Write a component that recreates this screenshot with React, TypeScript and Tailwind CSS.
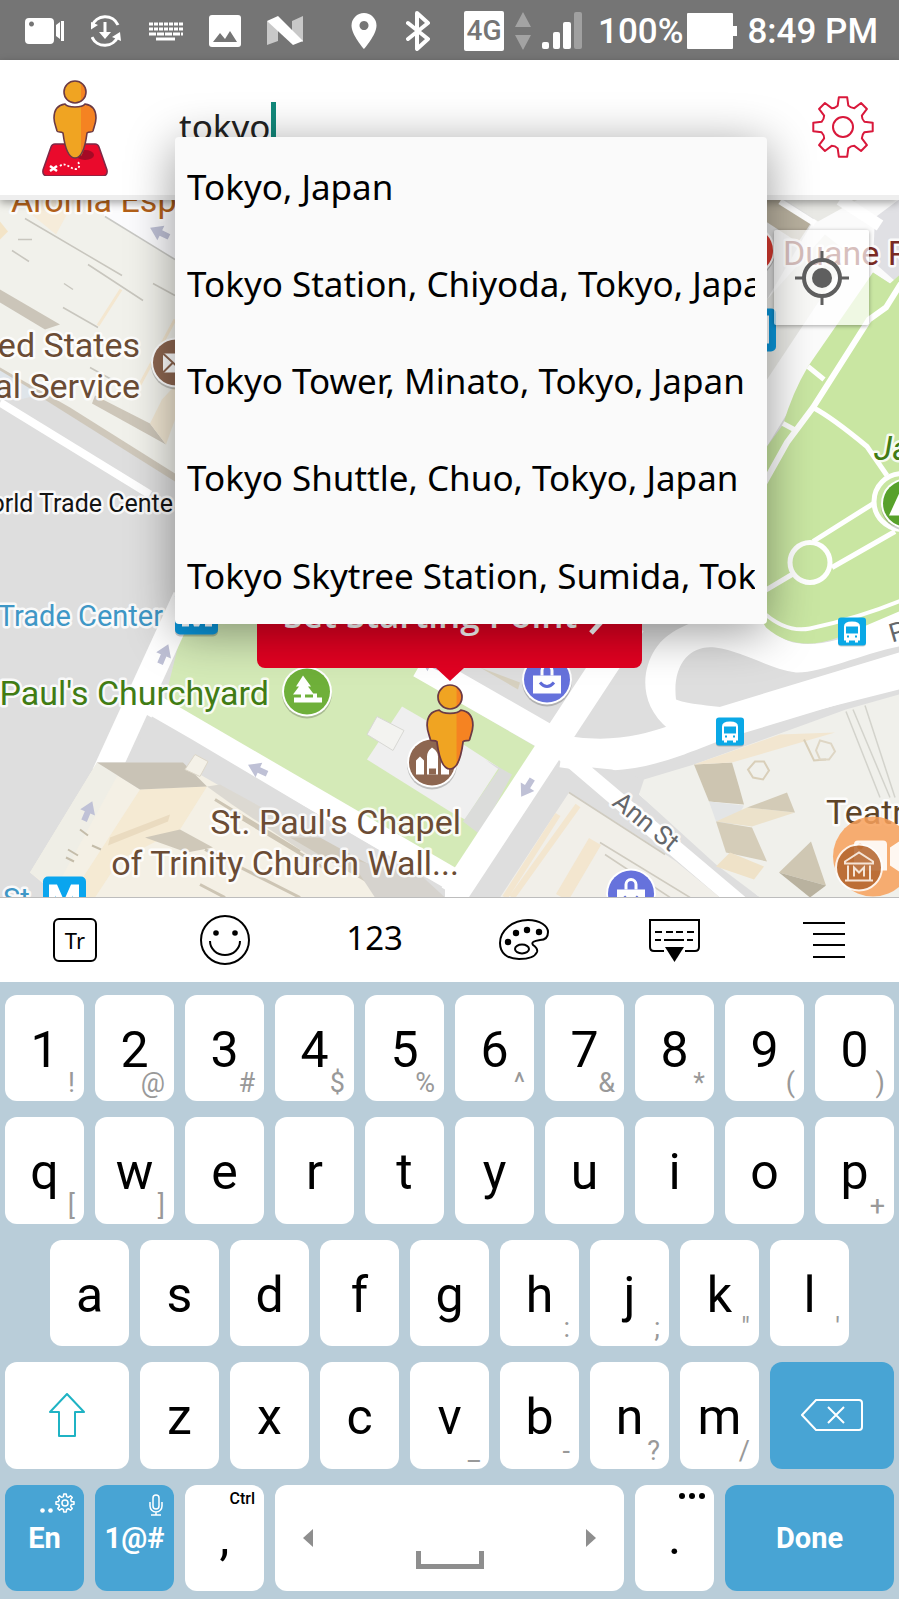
import type { ReactNode } from 'react';
import clsx from 'clsx';

const SUGGESTIONS = [
  'Tokyo, Japan',
  'Tokyo Station, Chiyoda, Tokyo, Japan',
  'Tokyo Tower, Minato, Tokyo, Japan',
  'Tokyo Shuttle, Chuo, Tokyo, Japan',
  'Tokyo Skytree Station, Sumida, Tokyo, Japan',
];

type KeyDef = { label: string; hint?: string };

const NUMBER_ROW: KeyDef[] = [
  { label: '1', hint: '!' },
  { label: '2', hint: '@' },
  { label: '3', hint: '#' },
  { label: '4', hint: '$' },
  { label: '5', hint: '%' },
  { label: '6', hint: '^' },
  { label: '7', hint: '&' },
  { label: '8', hint: '*' },
  { label: '9', hint: '(' },
  { label: '0', hint: ')' },
];

const TOP_ROW: KeyDef[] = [
  { label: 'q', hint: '[' },
  { label: 'w', hint: ']' },
  { label: 'e' },
  { label: 'r' },
  { label: 't' },
  { label: 'y' },
  { label: 'u' },
  { label: 'i' },
  { label: 'o' },
  { label: 'p', hint: '+' },
];

const HOME_ROW: KeyDef[] = [
  { label: 'a' },
  { label: 's' },
  { label: 'd' },
  { label: 'f' },
  { label: 'g' },
  { label: 'h', hint: ':' },
  { label: 'j', hint: ';' },
  { label: 'k', hint: '"' },
  { label: 'l', hint: "'" },
];

const BOTTOM_ROW: KeyDef[] = [
  { label: 'z' },
  { label: 'x' },
  { label: 'c' },
  { label: 'v', hint: '_' },
  { label: 'b', hint: '-' },
  { label: 'n', hint: '?' },
  { label: 'm', hint: '/' },
];

// Closed outline of a cog with eight teeth, centred on 0,0
function gearPath(outer: number, inner: number) {
  const point = (r: number, deg: number) => {
    const a = (deg * Math.PI) / 180;
    return `${(r * Math.cos(a)).toFixed(2)},${(r * Math.sin(a)).toFixed(2)}`;
  };
  let d = '';
  for (let i = 0; i < 8; i++) {
    const a = i * 45;
    d += `${i === 0 ? 'M' : 'L'}${point(inner, a - 14)}L${point(outer, a - 8)}L${point(outer, a + 8)}`;
    d += `L${point(inner, a + 14)}Q${point(inner * 0.93, a + 22)} ${point(inner, a + 31)}`;
  }
  return d + 'Z';
}

function Gear({ className, stroke }: { className?: string; stroke: number }) {
  return (
    <svg viewBox="-33 -33 66 66" className={className} fill="none" stroke="currentColor" strokeWidth={stroke} strokeLinejoin="round">
      <path d={gearPath(30, 22)} />
      <circle r="10" />
    </svg>
  );
}

function Pegman({ className }: { className?: string }) {
  return (
    <svg viewBox="0 0 44 79" className={className}>
      <path
        d="M12 24C15 28 29 28 32 24C39 25 43 30 43 38C43 43 41 47 40 51C39 53 36 51 34 53C33 61 30 78 22 78C14 78 11 61 10 53C8 51 5 53 4 51C3 47 1 43 1 38C1 30 5 25 12 24Z"
        fill="#f0a422"
      />
      <path d="M28 27C30 26 31 25 32 24C39 25 43 30 43 38C43 43 41 47 40 51C39 53 36 51 34 53C33 61 31 72 28 76Z" fill="#f58322" />
      <path
        d="M12 24C15 28 29 28 32 24C39 25 43 30 43 38C43 43 41 47 40 51C39 53 36 51 34 53C33 61 30 78 22 78C14 78 11 61 10 53C8 51 5 53 4 51C3 47 1 43 1 38C1 30 5 25 12 24Z"
        fill="none"
        stroke="#6b3a45"
        strokeWidth="1.6"
      />
      <circle cx="22" cy="12" r="11" fill="#f0a422" />
      <path d="M28 3A11 11 0 0 1 28 21Z" fill="#f58322" />
      <circle cx="22" cy="12" r="11" fill="none" stroke="#6b3a45" strokeWidth="1.6" />
    </svg>
  );
}

function StatusBar() {
  return (
    <div className="flex h-15 items-center bg-[#757575] pt-0.5 pr-[21px] pl-[25px] text-white">
      <div className="flex items-center gap-[26px]">
        <svg viewBox="0 0 40 32" className="h-8 w-10" fill="currentColor">
          <path fillRule="evenodd" d="M4 3h21a4 4 0 0 1 4 4v18a4 4 0 0 1-4 4H4a4 4 0 0 1-4-4V7a4 4 0 0 1 4-4Zm2.500 3.500a2.500 2.500 0 1 0 .01 0Z" />
          <path d="M31 10l4-3v17l-4-3ZM36 6h3v20h-3Z" />
        </svg>
        <svg viewBox="2 0 32 32" className="size-8" fill="none" stroke="currentColor" strokeWidth="3">
          <path d="M3 11A14 14 0 0 1 29 10M29 21A14 14 0 0 1 3 22" />
          <path d="M16 7v12" />
          <path d="M10 17h12l-6 7ZM0 6l9 4-8 5ZM32 26l-9-4 8-5Z" fill="currentColor" stroke="none" />
        </svg>
        <svg viewBox="0 0 34 32" className="h-8 w-[34px]" stroke="currentColor" strokeWidth="3">
          <path d="M0 9h34M0 14h34" strokeDasharray="4 1" />
          <path d="M0 19h34" strokeDasharray="7 1" />
          <path d="M7 24h19" />
        </svg>
        <svg viewBox="0 0 32 32" className="size-8">
          <rect width="32" height="32" rx="3" fill="currentColor" />
          <path d="M4 27l7-9 5 6 5-8 7 11Z" fill="#757575" />
        </svg>
        <svg viewBox="0 0 36 30" className="h-[30px] w-9" fill="currentColor">
          <path d="M0 5l11 5v15L0 29ZM25 5l11-5v26l-11-5Z" opacity=".6" />
          <path d="M0 5L11 0l25 25-10 4Z" />
        </svg>
      </div>
      <div className="ml-auto flex items-center">
        <svg viewBox="0 0 26 36" className="h-9 w-[26px]" fill="currentColor">
          <path fillRule="evenodd" d="M13 0a12.500 12.500 0 0 1 12.500 12.500C25.500 22 13 36 13 36S.5 22 .5 12.500A12.500 12.500 0 0 1 13 0Zm0 8a4.500 4.500 0 1 0 .01 0Z" />
        </svg>
        <svg viewBox="0 0 24 40" className="ml-[29px] h-10 w-6" fill="none" stroke="currentColor" strokeWidth="4" strokeLinecap="round" strokeLinejoin="round">
          <path d="M2 12l20 16-11 10V2l11 10L2 28" />
        </svg>
        <span className="ml-[34px] flex size-10 items-center justify-center rounded-xs bg-white font-[Roboto,sans-serif] text-[28px] font-medium text-[#757575]">
          4G
        </span>
        <svg viewBox="0 0 16 40" className="ml-[11px] h-10 w-4" fill="#a3a3a3">
          <path d="M8 1l8 15H0ZM8 39L0 24h16Z" />
        </svg>
        <svg viewBox="0 0 40 38" className="ml-[11px] h-[38px] w-10" fill="currentColor">
          <rect y="30" width="7" height="7" rx="2" />
          <rect x="11" y="20" width="7" height="17" rx="2" />
          <rect x="21" y="10" width="8" height="27" rx="2" />
          <rect x="32" width="8" height="37" rx="2" fill="#a0a0a0" />
        </svg>
        <span className="ml-4 pt-0.5 font-[Roboto,sans-serif] text-[35px] font-medium">100%</span>
        <svg viewBox="0 0 50 36" className="ml-1 h-9 w-[50px]" fill="currentColor">
          <rect width="46" height="36" rx="1" />
          <rect x="44" y="13" width="6" height="10" />
        </svg>
        <span className="ml-2.5 pt-0.5 font-[Roboto,sans-serif] text-[35px] font-medium">8:49 PM</span>
      </div>
    </div>
  );
}

function SearchHeader() {
  return (
    <header className="relative z-10 flex h-35 items-center border-b-[5px] border-[#eeeeee] bg-white shadow-[0_3px_8px_rgba(0,0,0,0.35)]">
      <div className="relative ml-[42px] h-24 w-[66px]">
        <svg viewBox="0 0 66 96" className="h-24 w-[66px]">
          <path d="M13 64h40q3 0 4 3l8 23q1 6-5 6H6q-6 0-5-6l8-23q1-3 4-3Z" fill="#ea0a2c" stroke="#7d2947" strokeWidth="1.500" />
          <ellipse cx="43" cy="75" rx="9" ry="5" fill="#a50a25" />
          <path d="M8 86l7 5M15 86l-7 5" stroke="#fff" strokeWidth="2.500" />
          <path d="M18 86c6-5 11 4 16 3s3-6 2-7" fill="none" stroke="#fff" strokeWidth="1.800" strokeDasharray="2 2" />
        </svg>
        <Pegman className="absolute top-0 left-[11px] h-[79px] w-11" />
      </div>
      <div className="ml-[71px] flex items-center pb-0.5">
        <input
          aria-label="Search location"
          defaultValue="tokyo"
          className="field-sizing-content bg-transparent font-['Noto_Sans',sans-serif] text-[35px] leading-[50px] text-[#222222] outline-none"
        />
        <span className="h-[50px] w-[5px] bg-[#12897b]" />
      </div>
      <button aria-label="Settings" className="mr-[23px] ml-auto pb-0.5 text-[#d9183b]">
        <Gear className="size-[66px]" stroke={2} />
      </button>
      <ul className="absolute top-[77px] right-[132px] left-[175px] z-20 rounded-sm bg-[#fafafa] shadow-[0_8px_48px_rgba(0,0,0,0.4)]">
        {SUGGESTIONS.map((place) => (
          <li key={place} className="h-[97px] px-3 last:h-[99px]">
            <button className="h-full w-full overflow-hidden pt-1 text-left font-['Noto_Sans',sans-serif] text-[35px] whitespace-nowrap text-black">
              {place}
            </button>
          </li>
        ))}
      </ul>
    </header>
  );
}

function Pin({ x, y, color, children }: { x: number; y: number; color: string; children?: ReactNode }) {
  return (
    <g transform={`translate(${x} ${y})`}>
      <circle cy="2" r="25" fill="#000" opacity=".2" />
      <circle r="25" fill="#fff" />
      <circle r="23" fill={color} />
      {children}
    </g>
  );
}

function BusStop({ x, y }: { x: number; y: number }) {
  return (
    <g transform={`translate(${x} ${y})`}>
      <rect y="1" width="28" height="28" rx="3" fill="#000" opacity=".2" />
      <rect width="28" height="28" rx="3" fill="#0aa8e6" />
      <path fillRule="evenodd" fill="#fff" d="M6 9q0-5 8-5t8 5v14h-2v2h-3v-2h-6v2H8v-2H6ZM8 9v7h12V9ZM9 18v2h2v-2Zm8 0v2h2v-2Z" />
    </g>
  );
}

function ShoppingBag() {
  return (
    <g fill="none" stroke="#fff" strokeWidth="3">
      <path d="M-5 -4v-5a5 5 0 0 1 10 0v5" />
      <path d="M-14 -4h28v18h-28Z" fill="#fff" stroke="none" />
      <path d="M-7 3q7 8 14 0" stroke="#5f6bd8" />
    </g>
  );
}

function OneWay({ x, y, angle }: { x: number; y: number; angle: number }) {
  return <path d="M11 0L-1 -8V-3H-10V3H-1V8Z" fill="#bfc1d6" transform={`translate(${x} ${y}) rotate(${angle})`} />;
}

// Drawn in screen coordinates, so the view box starts below the header
function StreetMap() {
  return (
    <svg
      viewBox="0 200 899 698"
      preserveAspectRatio="xMidYMid slice"
      className="absolute inset-0 h-full w-full font-[Roboto,sans-serif]"
    >
      <rect y="200" width="899" height="698" fill="#dedede" />

      {/* Post office block */}
      <path d="M0 200H175V478L0 368Z" fill="#f1f1eb" />
      <path d="M0 372L175 482V474L70 408L0 368Z" fill="#cfc8bb" />
      <path d="M0 371L40 395L20 400L0 388Z" fill="#dfe5ea" />
      <path d="M0 290L60 325L45 330L0 303Z" fill="#cbc5b9" />
      <path d="M95 396L150 424L166 445L92 404Z" fill="#cdc6b9" />
      <path d="M162 400L175 386V420L166 445L150 424Z" fill="#f0e6d2" />
      <path d="M28 212L40 200H75L56 235Z" fill="#f6ecda" />
      <path d="M0 222L8 232L0 240Z" fill="#f3e4c7" />
      <path d="M98 326L121 290M140 385L175 320" stroke="#f4e7d0" strokeWidth="3" />
      <path d="M25 219L122 276M88 265L143 301M63 308L98 328M153 284L175 296M18 240L32 240M12 251L29 262M64 284L73 290M90 368L126 388" stroke="#c8c6be" strokeWidth="1.500" />
      <path d="M95 200H175V260Q140 240 105 217Z" fill="#fbfbfd" />
      <path d="M105 217L175 260" stroke="#c8c8c4" strokeWidth="1.500" />
      <path d="M0 403L150 495" stroke="#fff" strokeWidth="8" />
      <OneWay x={160} y={233} angle={206} />

      {/* St. Paul's churchyard */}
      <path d="M187 610H400L462 704L537 748L459 868L430 872L327 808L163 708Z" fill="#d4eab7" />
      <path d="M367 760L402 707L428 722L499 768L465 820L450 812Z" fill="#efefef" />
      <path d="M377 717L404 731L393 751L367 735Z" fill="#f3f3f0" stroke="#d8d8d4" />
      <path d="M485 760L512 775L480 835L463 822L499 770Z" fill="#dbdcda" />

      {/* Loop at the foot of the park */}
      <path d="M669 730C638 705 642 670 655 650C668 630 690 624 720 612H760C775 645 800 650 838 640L899 605V690L700 740Z" fill="#fff" />
      <path d="M676 700C672 665 690 645 715 648C745 652 770 670 796 673C820 674 860 655 899 647V655L745 711C720 706 690 706 676 700Z" fill="#dedede" />

      {/* City Hall Park */}
      <path d="M767 280L800 235L830 200H899V290L873 273L767 447Z" fill="#fbfbfb" />
      <path d="M755 200H812V224L767 300H755Z" fill="#e2e2e2" />
      <path d="M755 200H780L812 222L798 243L755 215Z" fill="#b9b19f" />
      <path d="M785 200L818 222L858 200ZM767 300L825 235L850 255L767 380Z" fill="#e9e9e5" />
      <path d="M875 218L899 200V285L873 262Z" fill="#e0e0e4" />
      <path d="M780 202L815 224" stroke="#fff" strokeWidth="6" />
      <path d="M840 200L880 226" stroke="#fff" strokeWidth="12" />
      <path d="M873 273L890 284L899 276V612L838 638Q796 654 766 628L755 610V465L767 447L783 425Q793 392 808 367Z" fill="#c9e6a2" />
      <g fill="none" stroke="#fff" strokeWidth="5">
        <path d="M901 284L886 308L869 320L813 408L787 443L755 500" strokeWidth="6" />
        <path d="M808 367L824 380M783 424L796 431" />
        <path d="M813 408Q832 418 867 447L887 476" />
        <circle cx="810" cy="563" r="20" />
        <path d="M813 542L875 503M832 568L895 532M792 575L760 594" />
        <path d="M760 610Q785 634 810 629Q860 618 901 601" strokeWidth="4" />
        <circle cx="902" cy="502" r="28" />
      </g>

      {/* Roads */}
      <g fill="none" stroke="#fff">
        <path d="M186 598L105 775" strokeWidth="27" />
        <path d="M140 698L470 890" strokeWidth="23" />
        <path d="M420 665L565 748L750 906" strokeWidth="27" />
        <path d="M632 624L448 904" strokeWidth="28" />
        <path d="M562 752C625 762 660 748 720 724L905 668" strokeWidth="32" />
      </g>
      <path d="M480 668L520 683L518 690Z" fill="#d6d0bf" />

      {/* Blocks either side of Ann St */}
      <path d="M592 768L612 770L644 780L639 795L760 898H746Z" fill="#dedede" />
      <path d="M639 795L644 780L694 765L846 710L899 695V898H760L716 865Z" fill="#f0f0eb" />
      <path d="M694 765L732 763L739 787L744 805L709 802Z" fill="#cdc5b1" />
      <path d="M694 765L732 763L835 733L780 735Z" fill="#f2e6d0" />
      <path d="M709 802L744 806L732 827L716 822Z" fill="#e3e5e6" />
      <path d="M747 808L795 813L752 827L716 822Z" fill="#ece2cb" />
      <path d="M747 808L787 793L795 813Z" fill="#d3cbb7" />
      <path d="M716 822L752 828L767 862L726 853Z" fill="#d5cdb9" />
      <path d="M716 867L730 853L764 867L754 880Z" fill="#efe2c8" />
      <path d="M811 842L826 886L779 873Z" fill="#cfc7b3" />
      <path d="M779 873L826 886L810 898Z" fill="#b9b29f" />
      <path d="M755 762L764 762L769 771L763 780L753 778L748 770ZM804 740L814 761L826 760" fill="none" stroke="#d9cfb9" strokeWidth="2" />
      <path d="M820 741L831 744L835 752L829 760H820L816 751Z" fill="none" stroke="#ded6c4" strokeWidth="2" />
      <path d="M846 712L880 798M853 710L890 798M865 706L895 798" stroke="#d3d3cc" strokeWidth="1.500" />
      <path d="M569 793L640 838L676 862L720 898H500Z" fill="#f1efe9" />
      <path d="M578 806L512 898M558 815L505 898" stroke="#f3e6cf" strokeWidth="6" />
      <path d="M595 842L562 898" stroke="#f3e6cf" strokeWidth="14" />
      <path d="M569 793L665 855M600 843L690 898M605 855L670 898" stroke="#cfcbc0" strokeWidth="1.500" />

      {/* Block south of the churchyard */}
      <path d="M152 717L192 740L330 822L445 890V898H60L97 763L127 763Z" fill="#dedede" />
      <path d="M97 763L140 790L200 775L330 850L435 898H60L30 873Z" fill="#f4f0e5" />
      <path d="M30 873L97 763L118 775L55 890Z" fill="#efeee6" />
      <path d="M140 790L207 787L180 830L120 860L95 898H70Z" fill="#f5ead3" />
      <path d="M110 838L170 815L168 822L108 846Z" fill="#eadbc0" />
      <path d="M97 763H183L207 787L140 790Z" fill="#c9c3b6" />
      <path d="M145 838L180 830L213 848L187 853Z" fill="#cfc8b9" />
      <path d="M207 787L232 805L330 870L320 840L220 785Z" fill="#dcd9d2" />
      <path d="M240 818L330 872M215 800L300 852M205 850L300 898M200 885L225 898" stroke="#cdc5b4" strokeWidth="3" />
      <path d="M290 838L320 838L400 882L370 885Z" fill="#d0cabd" />
      <path d="M350 860L420 875L445 898H375Z" fill="#d6d3ce" />
      <path d="M195 755L208 762L200 777L185 770Z" fill="#f4f1e8" stroke="#dcd6c8" />
      <path d="M80 830l8 6M68 850l10 6M92 846l9 4M66 858l8 4" stroke="#c4bca9" strokeWidth="2" />
      <OneWay x={164} y={655} angle={-67} />
      <OneWay x={88} y={812} angle={-67} />
      <OneWay x={258} y={770} angle={205} />
      <OneWay x={527} y={788} angle={122} />
      <OneWay x={430} y={664} angle={205} />

      {/* Markers */}
      <Pin x={176} y={363} color="#8d6650">
        <path d="M-13 -9H14V10H-13Z" fill="#fff" />
        <path d="M-13 -9L0 3L14 -9M-13 10L-3 0M14 10L3 0" fill="none" stroke="#8d6650" strokeWidth="2" />
      </Pin>
      <Pin x={307} y={692} color="#6fb03a">
        <path d="M-4 -16L4 -5H1L7 3H-2V6H6V2H10V6H15V11H-13V6H-6V3H-14L-8 -5H-11Z" fill="#fff" />
      </Pin>
      <Pin x={547} y={680} color="#6672dc">
        <ShoppingBag />
      </Pin>
      <Pin x={631} y={894} color="#6672dc">
        <ShoppingBag />
      </Pin>
      <Pin x={432} y={763} color="#8d6650">
        <path d="M-16 12V-2L-12 -6L-8 -2V12ZM-5 12V-6Q-5 -11 0 -15Q6 -11 6 -6V12ZM9 12V-2L13 -6L17 -2V12Z" fill="#fff" />
        <path d="M-3 12V6H4V12Z" fill="#8d6650" />
      </Pin>
      <Pin x={750} y={251} color="#d93a30" />
      <Pin x={906} y={504} color="#58a12b">
        <path d="M-5 -14L-17 12H6Z" fill="#fff" />
      </Pin>
      <rect x="175" y="594" width="43" height="43" rx="5" fill="#000" opacity=".2" />
      <rect x="175" y="592" width="43" height="43" rx="5" fill="#0a97dc" />
      <path d="M182 627V600H190L197 616L204 600H212V627H205V612L199 627H194L189 612V627Z" fill="#fff" />
      <rect x="734" y="309" width="42" height="43" rx="5" fill="#0a97dc" />
      <path d="M745 316H769V344H745Z" fill="#fff" />
      <rect x="43" y="877" width="43" height="43" rx="5" fill="#0aa5ee" />
      <path d="M49 912V885H57L64 901L71 885H79V912H73V896L67 912H61L55 896V912Z" fill="#fff" />
      <BusStop x={838} y={618} />
      <BusStop x={716} y={718} />

      {/* Labels */}
      <g className="[paint-order:stroke]" stroke="#fff" strokeOpacity=".85" strokeWidth="5" strokeLinejoin="round">
        <g fontSize="34">
          <text x="11" y="212" fill="#b5621a">Aroma Espresso</text>
          <text x="140" y="357" textAnchor="end" fill="#6b4c35">United States</text>
          <text x="140" y="398" textAnchor="end" fill="#6b4c35">Postal Service</text>
          <text x="269" y="705" textAnchor="end" fill="#417c14">St. Paul's Churchyard</text>
          <text x="461" y="834" textAnchor="end" fill="#6b4c35">St. Paul's Chapel</text>
          <text x="459" y="875" textAnchor="end" fill="#6b4c35">of Trinity Church Wall...</text>
          <text x="826" y="824" fill="#5e4428">Teatro</text>
          <text x="783" y="265" fill="#7a2a24">Duane Reade</text>
          <text x="874" y="460" fill="#417c14" fontStyle="italic">James</text>
        </g>
        <text x="173" y="512" textAnchor="end" fontSize="25" fill="#141414">World Trade Cente</text>
        <g fontSize="29" fill="#3f97c6">
          <text x="163" y="626" textAnchor="end">World Trade Center</text>
          <text x="3" y="909">St</text>
        </g>
        <g fontSize="26" fill="#65676b">
          <text transform="translate(611 805) rotate(39)">Ann St</text>
          <text transform="translate(892 643) rotate(-16)">Park Row</text>
        </g>
      </g>

      {/* Screen recorder bubble above the museum marker */}
      <circle cx="873" cy="857" r="40" fill="#f7a05a" opacity=".85" />
      <path fillRule="evenodd" fill="#fff" d="M858 841H883Q887 841 887 845V871H854V845Q854 841 858 841ZM860 844a3 3 0 1 0 .01 0ZM890 848L899 842V872L890 866Z" opacity=".9" />
      <circle cx="859" cy="868" r="23" fill="#b3642c" opacity=".85" stroke="#fff" strokeWidth="2" />
      <path d="M845 862L859 853L873 862V864H845ZM848 866V880M870 866V880M845 881H873M854 877V868L859 873L864 868V877" fill="none" stroke="#f5e4d6" strokeWidth="2" />
    </svg>
  );
}

function MapView() {
  return (
    <main className="relative h-[698px] overflow-hidden border-b border-[#bdbdbd]">
      <StreetMap />
      <button
        aria-label="My location"
        className="absolute top-[30px] right-[30px] flex size-[95px] items-center justify-center rounded-xs bg-white/70 shadow-[0_1px_4px_rgba(0,0,0,0.35)]"
      >
        <svg viewBox="-27 -27 54 54" className="size-[54px]" fill="none" stroke="#5f5f5f" strokeWidth="4">
          <circle r="18" />
          <circle r="10" fill="#5f5f5f" stroke="none" />
          <path d="M0 -27V-18M0 18V27M-27 0H-18M18 0H27" strokeWidth="3" />
        </svg>
      </button>
      <div className="absolute inset-x-0 top-[378px] flex flex-col items-center">
        <button className="flex h-[90px] w-[385px] items-center justify-center gap-3 rounded-lg bg-[#e20021] pr-2.5 pb-4 font-['Open_Sans',sans-serif] text-[35px] font-semibold text-white">
          Set Starting Point
          <svg viewBox="0 0 16 28" className="mt-3 h-7 w-4" fill="none" stroke="currentColor" strokeWidth="5">
            <path d="M2 2l11 12L2 26" />
          </svg>
        </button>
        <svg viewBox="0 0 28 13" className="h-[13px] w-7" fill="#e20021">
          <path d="M0 0h28L14 13Z" />
        </svg>
        <Pegman className="mt-0.5 h-[88px] w-12" />
      </div>
    </main>
  );
}

function ToolButton({ label, children }: { label: string; children: ReactNode }) {
  return (
    <button aria-label={label} className="flex flex-1 items-center justify-center">
      {children}
    </button>
  );
}

function KeyboardToolbar() {
  return (
    <div className="flex h-21 bg-white text-black">
      <ToolButton label="Translate">
        <span className="flex size-11 items-center justify-center rounded-md border-2 border-black font-['Noto_Sans',sans-serif] text-[22px]">
          Tr
        </span>
      </ToolButton>
      <ToolButton label="Emoji">
        <svg viewBox="0 0 50 50" className="size-[50px]" fill="none" stroke="currentColor" strokeWidth="2">
          <circle cx="25" cy="25" r="24" />
          <path d="M10 26a15 14 0 0 0 30 0" />
          <circle cx="16" cy="18" r="2.800" fill="currentColor" stroke="none" />
          <circle cx="35" cy="18" r="2.800" fill="currentColor" stroke="none" />
        </svg>
      </ToolButton>
      <ToolButton label="Numbers">
        <span className="pb-1 font-['Noto_Sans',sans-serif] text-[33px]">123</span>
      </ToolButton>
      <ToolButton label="Theme">
        <svg viewBox="0 0 50 42" className="h-[42px] w-[50px]" fill="none" stroke="currentColor" strokeWidth="2">
          <path d="M29 1C41 1 49 7 49 13C49 19 45 21 41 21C35 22 32 23 34 26C37 28 39 30 38 33C36 38 29 40 20 40C8 40 1 34 1 24C1 12 13 1 29 1Z" />
          <ellipse cx="23" cy="30" rx="7" ry="4.500" />
          <g fill="currentColor" stroke="none">
            <circle cx="9" cy="23" r="3.200" />
            <circle cx="17" cy="14" r="3.200" />
            <circle cx="28" cy="11" r="3.200" />
            <circle cx="40" cy="13" r="3.200" />
          </g>
        </svg>
      </ToolButton>
      <ToolButton label="Hide keyboard">
        <svg viewBox="0 0 52 44" className="h-11 w-[52px]" fill="none" stroke="currentColor" strokeWidth="2">
          <path d="M16 33H6q-4 0-4-4V2h49v27q0 4-4 4H37" />
          <path d="M7 14h7M18 14h7M28 14h7M39 14h7M7 22h6M16 22h20M39 22h6" />
          <path d="M17 29h19l-9.500 15Z" fill="currentColor" stroke="none" />
        </svg>
      </ToolButton>
      <ToolButton label="Menu">
        <svg viewBox="0 0 42 38" className="h-[38px] w-[42px]" stroke="currentColor" strokeWidth="2">
          <path d="M0 2h42M10 13h32M10 24h32M10 36h32" />
        </svg>
      </ToolButton>
    </div>
  );
}

function Key({ label, hint, className, children }: { label: string; hint?: string; className?: string; children?: ReactNode }) {
  return (
    <button
      aria-label={children ? label : undefined}
      className={clsx('relative flex items-center justify-center rounded-xl', className ?? 'col-span-2 bg-white pt-1 text-[50px] text-black')}
    >
      {children ?? label}
      {hint && <span className="absolute right-[9px] bottom-1 text-[27px] leading-none text-[#999999]">{hint}</span>}
    </button>
  );
}

function Row({ children }: { children: ReactNode }) {
  return <div className="grid min-h-[90px] flex-1 grid-cols-20 gap-x-[11px]">{children}</div>;
}

function Keyboard() {
  return (
    <div className="flex flex-1 flex-col gap-4 bg-[#b9cdd9] px-[5px] pt-[13px] pb-2 font-[Roboto,sans-serif]">
      <Row>
        {NUMBER_ROW.map((k) => (
          <Key key={k.label} {...k} />
        ))}
      </Row>
      <Row>
        {TOP_ROW.map((k) => (
          <Key key={k.label} {...k} />
        ))}
      </Row>
      <Row>
        <span />
        {HOME_ROW.map((k) => (
          <Key key={k.label} {...k} />
        ))}
      </Row>
      <Row>
        <Key label="Shift" className="col-span-3 bg-white text-[#1fb3c4]">
          <svg viewBox="0 0 38 44" className="h-11 w-[38px]" fill="none" stroke="currentColor" strokeWidth="2" strokeLinejoin="round">
            <path d="M19 1L36 19H27V43H11V19H2Z" />
          </svg>
        </Key>
        {BOTTOM_ROW.map((k) => (
          <Key key={k.label} {...k} />
        ))}
        <Key label="Backspace" className="col-span-3 bg-[#48a4d4] text-white">
          <svg viewBox="0 0 62 32" className="h-8 w-[62px]" fill="none" stroke="currentColor" strokeWidth="2">
            <path d="M15 1H58q3 0 3 3V28q0 3-3 3H15L1 16Z" />
            <path d="M27 8L43 24M43 8L27 24" />
          </svg>
        </Key>
      </Row>
      <Row>
        <Key label="En" className="col-span-2 bg-[#48a4d4] pt-0.5 text-[29px] font-bold text-white">
          En
          <span className="absolute top-2 right-[9px] flex items-end gap-0.5">
            <svg viewBox="0 0 13 5" className="h-[5px] w-[13px]" fill="currentColor">
              <circle cx="2.500" cy="2.500" r="2.300" />
              <circle cx="10.500" cy="2.500" r="2.300" />
            </svg>
            <Gear className="size-5" stroke={5} />
          </span>
        </Key>
        <Key label="Symbols" className="col-span-2 bg-[#48a4d4] pt-0.5 text-[29px] font-bold text-white">
          1@#
          <svg viewBox="0 0 14 22" className="absolute top-[9px] right-[11px] h-[22px] w-3.5" fill="none" stroke="currentColor" strokeWidth="1.500">
            <rect x="4" y="1" width="6" height="14" rx="3" />
            <path d="M1 8v4a6 6 0 0 0 12 0V8M7 18v3M2 21h10" />
          </svg>
        </Key>
        <Key label="Comma" className="col-span-2 bg-white text-[50px] text-black">
          ,
          <span className="absolute top-1.5 right-[9px] text-base leading-none font-medium">Ctrl</span>
        </Key>
        <Key label="Space" className="col-span-8 bg-white text-[#8e8e8e]">
          <span className="flex w-full items-center justify-between px-7">
            <svg viewBox="0 0 10 18" className="h-[18px] w-2.5" fill="currentColor">
              <path d="M10 0v18L0 9Z" />
            </svg>
            <svg viewBox="0 0 68 18" className="mt-11 h-[18px] w-[68px]" fill="none" stroke="currentColor" strokeWidth="5">
              <path d="M2.500 0v15.500h63V0" />
            </svg>
            <svg viewBox="0 0 10 18" className="h-[18px] w-2.5" fill="currentColor">
              <path d="M0 0v18l10-9Z" />
            </svg>
          </span>
        </Key>
        <Key label="Period" className="col-span-2 bg-white text-[50px] text-black">
          .
          <svg viewBox="0 0 26 6" className="absolute top-2 right-[9px] h-1.5 w-[26px]" fill="currentColor">
            <circle cx="3" cy="3" r="3" />
            <circle cx="13" cy="3" r="3" />
            <circle cx="23" cy="3" r="3" />
          </svg>
        </Key>
        <Key label="Done" className="col-span-4 bg-[#48a4d4] pt-0.5 text-[29px] font-bold text-white" />
      </Row>
    </div>
  );
}

export default function App() {
  return (
    <div className="flex min-h-screen flex-col overflow-hidden bg-white">
      <StatusBar />
      <SearchHeader />
      <MapView />
      <KeyboardToolbar />
      <Keyboard />
    </div>
  );
}
